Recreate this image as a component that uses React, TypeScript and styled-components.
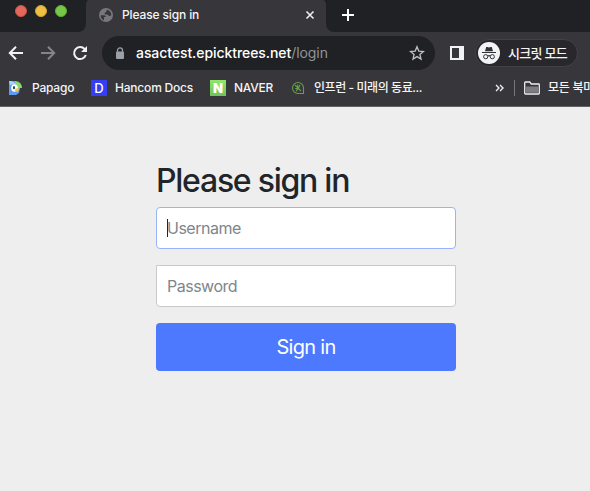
import React from 'react';
import styled, { createGlobalStyle } from 'styled-components';

const GlobalStyle = createGlobalStyle`
  * { box-sizing: border-box; }
  html, body, #root { height: 100%; }
  body {
    margin: 0;
    overflow: hidden;
    background: #eee;
    font-family: Inter, "Noto Sans CJK KR", sans-serif;
    -webkit-font-smoothing: antialiased;
  }
`;

const Window = styled.div`
  width: 590px;
  height: 491px;
  display: flex;
  flex-direction: column;
  overflow: hidden;
`;

const Chrome = styled.header`
  height: 107px;
  background: #37363b;
  border-bottom: 1px solid #626166;
  color: #f4f4f5;
`;

const Label = styled.span<{ $size?: number; $spacing?: number }>`
  display: block;
  flex: none;
  font-size: ${(p) => p.$size ?? 12}px;
  font-weight: 500;
  letter-spacing: ${(p) => p.$spacing ?? 0}px;
  line-height: 18px;
  white-space: nowrap;
`;

const TabStrip = styled.div`
  display: flex;
  height: 32px;
`;

const WindowControls = styled.div`
  display: flex;
  gap: 8px;
  width: 86px;
  padding: 5px 0 0 15px;
  background: #202124;
  border-bottom-right-radius: 8px;
`;

const Light = styled.span<{ $color: string; $edge: string }>`
  width: 12px;
  height: 12px;
  border-radius: 50%;
  background: ${(p) => p.$color};
  border: 1px solid ${(p) => p.$edge};
`;

const TabSlot = styled.div`
  width: 240px;
  background: linear-gradient(#202124 8px, #37363b 8px);
`;

const Tab = styled.div`
  display: flex;
  align-items: center;
  height: 32px;
  padding: 0 10px 2px 12px;
  gap: 8px;
  background: #37363b;
  border-radius: 3px 3px 0 0 / 5px 5px 0 0;
`;

const CloseIcon = styled.svg`
  margin-left: auto;
`;

const StripRest = styled.div`
  flex: 1;
  padding: 9px 0 0 16px;
  background: #202124;
  border-bottom-left-radius: 8px;
  svg { display: block; }
`;

const Toolbar = styled.div`
  display: flex;
  align-items: center;
  height: 42px;
  padding-left: 8px;
  svg { display: block; flex: none; }
`;

const NavButtons = styled.div`
  display: flex;
  gap: 16px;
  width: 94px;
`;

const AddressBar = styled.div`
  display: flex;
  align-items: center;
  width: 333px;
  height: 34px;
  padding: 0 10px 0 13px;
  border-radius: 17px;
  background: #202124;
`;

const Url = styled.div`
  flex: 1;
  margin-left: 11px;
  font-size: 14px;
  font-weight: 500;
  letter-spacing: -0.07px;
  line-height: 20px;
  white-space: nowrap;
  color: #fff;
`;

const UrlPath = styled.span`
  font-weight: 400;
  color: #929397;
`;

const SidePanel = styled.span`
  width: 14px;
  height: 14px;
  margin: 0 11px 0 15px;
  border: solid #f1f2f4;
  border-width: 2px 5px 2px 2px;
`;

const Incognito = styled.div`
  display: flex;
  align-items: center;
  gap: 8px;
  width: 103px;
  height: 28px;
  padding-left: 2px;
  border: 1px solid #414146;
  border-radius: 14px;
  background: #28282c;
`;

const Bookmarks = styled.nav`
  display: flex;
  align-items: center;
  height: 32px;
  padding: 0 0 4px 8px;
  svg { display: block; flex: none; }
`;

const Bookmark = styled.div<{ $width: number }>`
  display: flex;
  flex: none;
  align-items: center;
  gap: 8px;
  width: ${(p) => p.$width}px;
`;

const SiteTile = styled.span<{ $background: string; $weight: number }>`
  width: 16px;
  height: 16px;
  background: ${(p) => p.$background};
  color: #fff;
  font-size: 13px;
  font-weight: ${(p) => p.$weight};
  line-height: 16px;
  text-align: center;
`;

const Separator = styled.span`
  flex: none;
  width: 1px;
  height: 16px;
  margin: 0 9px 0 8px;
  background: #77767b;
`;

const Page = styled.main`
  flex: 1;
  padding: 54px 134px 0 156px;
  background: #eee;
`;

const Form = styled.form`
  display: flex;
  flex-direction: column;
`;

const Title = styled.h2`
  height: 40px;
  margin: 0 0 6px;
  color: #212529;
  font-size: 32px;
  font-weight: 500;
  letter-spacing: -1.25px;
  line-height: 40px;
  white-space: nowrap;
`;

const Field = styled.div<{ $focused?: boolean }>`
  display: flex;
  align-items: center;
  height: 42px;
  margin-bottom: 16px;
  padding: 0 10px;
  border: 1px solid ${(p) => (p.$focused ? '#96b5fa' : '#c9c9cb')};
  border-radius: ${(p) => (p.$focused ? '4px' : '0 0 4px 4px')};
  background: #fff;
  color: #80858c;
  font-size: 16px;
  letter-spacing: -0.5px;
  line-height: 20px;
`;

const Caret = styled.span`
  width: 1px;
  height: 18px;
  margin-right: -1px;
  background: #222;
`;

const Submit = styled.button`
  height: 48px;
  padding: 0;
  border: 0;
  border-radius: 4px;
  background: #4d79ff;
  color: #fff;
  font: 400 20px/48px Inter, sans-serif;
  letter-spacing: -0.7px;
`;

const App = () => (
  <Window>
    <GlobalStyle />
    <Chrome>
      <TabStrip>
        <WindowControls>
          <Light $color="#e0685c" $edge="#ce5347" />
          <Light $color="#edbf42" $edge="#d6a52e" />
          <Light $color="#78c848" $edge="#60b132" />
        </WindowControls>
        <TabSlot>
          <Tab>
            <svg width="16" height="16" viewBox="0 0 16 16">
              <circle cx="8" cy="8" r="7" fill="#77787c" />
              <path d="M2.7 8.2h3.2c1.2 0 2 .9 2 1.8H6v3.2C3.7 12.5 2.5 10.4 2.7 8.2ZM8.8 2.7c2.8.4 4.5 2.5 4.5 5.1-.5 1.2-1.2 1.5-2.2 1.2-.7-.2-.8-1.5-1.6-1.5H7c-.7-1-.3-2 .7-2.2 1.1-.2.5-1.7 1.1-2.6Z" fill="#37363b" />
            </svg>
            <Label $spacing={-0.13}>Please sign in</Label>
            <CloseIcon width="12" height="12" viewBox="0 0 12 12">
              <path d="m2.5 2.5 7 7m0-7-7 7" stroke="#eee" strokeWidth="1.6" />
            </CloseIcon>
          </Tab>
        </TabSlot>
        <StripRest>
          <svg width="12" height="12" viewBox="0 0 12 12">
            <path d="M6 0v12M0 6h12" stroke="#fff" strokeWidth="2" />
          </svg>
        </StripRest>
      </TabStrip>
      <Toolbar>
        <NavButtons>
          <svg width="16" height="16" viewBox="0 0 16 16" fill="none" stroke="#f2f2f4" strokeWidth="2">
            <path d="M15 8H2.5M8 1.8 1.8 8 8 14.2" />
          </svg>
          <svg width="16" height="16" viewBox="0 0 16 16" fill="none" stroke="#858489" strokeWidth="2">
            <path d="M1 8h12.5M8 1.8 14.2 8 8 14.2" />
          </svg>
          <svg width="16" height="16" viewBox="0 0 16 16">
            <path d="M12.6 4A6 6 0 1 0 13.8 10" fill="none" stroke="#f2f2f4" strokeWidth="2" />
            <path d="M15 1v6H9z" fill="#f2f2f4" />
          </svg>
        </NavButtons>
        <AddressBar>
          <svg width="10" height="13" viewBox="0 0 10 13">
            <path d="M2.5 5V3.4a2.5 2.5 0 0 1 5 0V5" fill="none" stroke="#9aa0a6" strokeWidth="1.3" />
            <rect x="1" y="4.5" width="8" height="7.5" rx="1" fill="#9aa0a6" />
          </svg>
          <Url>asactest.epicktrees.net<UrlPath>/login</UrlPath></Url>
          <svg width="16" height="16" viewBox="0 0 16 16">
            <path d="m8 1.8 1.8 4.3 4.7.4-3.6 3 1.1 4.6-4-2.5-4 2.5 1.1-4.6-3.6-3 4.7-.4Z" fill="none" stroke="#bdc1c6" strokeWidth="1.3" />
          </svg>
        </AddressBar>
        <SidePanel />
        <Incognito>
          <svg width="22" height="22" viewBox="0 0 22 22">
            <circle cx="11" cy="11" r="11" fill="#f1f3f4" />
            <path d="M7 9.2 8.2 5h1.3l1.5.6 1.5-.6h1.3L15 9.2Z" fill="#303136" />
            <path d="M4 10.5h14M9.8 14.2c.7-.6 1.7-.6 2.4 0" fill="none" stroke="#303136" strokeWidth="1.1" />
            <circle cx="7.7" cy="14.7" r="2.1" fill="none" stroke="#303136" />
            <circle cx="14.3" cy="14.7" r="2.1" fill="none" stroke="#303136" />
          </svg>
          <Label $size={13} $spacing={-0.7}>시크릿 모드</Label>
        </Incognito>
      </Toolbar>
      <Bookmarks>
        <Bookmark $width={83}>
          <svg width="16" height="16" viewBox="0 0 16 16">
            <path d="M1 1h6l5 6-1 6-3 2H1Z" fill="#5e9bef" />
            <path d="M1 1c3-.4 5 .8 7 3L2 5Z" fill="#a4d4ff" />
            <path d="M7 1c4 0 7 3 7 7H7Z" fill="#87d96f" />
            <ellipse cx="6.5" cy="8" rx="3.3" ry="3.8" fill="#fff" />
            <ellipse cx="6" cy="7.7" rx="1" ry="1.6" fill="#24334b" />
            <path d="M7.5 8.5H12l-2.5 3.5-2.5-1Z" fill="#f5c73e" />
          </svg>
          <Label $spacing={-0.22}>Papago</Label>
        </Bookmark>
        <Bookmark $width={119}>
          <SiteTile $background="#343ef5" $weight={500}>D</SiteTile>
          <Label $spacing={-0.2}>Hancom Docs</Label>
        </Bookmark>
        <Bookmark $width={80}>
          <SiteTile $background="linear-gradient(#91e66d, #6cc45e)" $weight={900}>N</SiteTile>
          <Label $spacing={-0.25}>NAVER</Label>
        </Bookmark>
        <Bookmark $width={204}>
          <svg width="16" height="16" viewBox="0 0 16 16" fill="none" stroke="#659f48" strokeWidth="1.1">
            <path d="M13.5 13.5H8A5.5 5.5 0 1 1 13.5 8Z" />
            <path d="m5 5 6 6M7.7 4.5v3.2M10 5 8.5 8M5.2 8.5H8M6 11l2-2" />
          </svg>
          <Label $spacing={-0.43}>인프런 - 미래의 동료...</Label>
        </Bookmark>
        <svg width="12" height="12" viewBox="0 0 12 12">
          <path d="m2 3 3 3-3 3m4-6 3 3-3 3" fill="none" stroke="#eee" strokeWidth="1.4" />
        </svg>
        <Separator />
        <Bookmark $width={100}>
          <svg width="16" height="14" viewBox="0 0 16 14">
            <path d="M.7 12.3V1.7c0-.4.3-.7.7-.7h4.4l1.5 2h7.3c.4 0 .7.3.7.7v8.6c0 .4-.3.7-.7.7H1.4c-.4 0-.7-.3-.7-.7Z" fill="#37363b" stroke="#eee" strokeWidth="1.3" />
            <path d="M2 5.5h12v6.3H2Z" fill="#7d7c81" />
          </svg>
          <Label $spacing={-0.25}>모든 북마크</Label>
        </Bookmark>
      </Bookmarks>
    </Chrome>
    <Page>
      <Form>
        <Title>Please sign in</Title>
        <Field $focused><Caret />Username</Field>
        <Field>Password</Field>
        <Submit type="button">Sign in</Submit>
      </Form>
    </Page>
  </Window>
);

export default App;
